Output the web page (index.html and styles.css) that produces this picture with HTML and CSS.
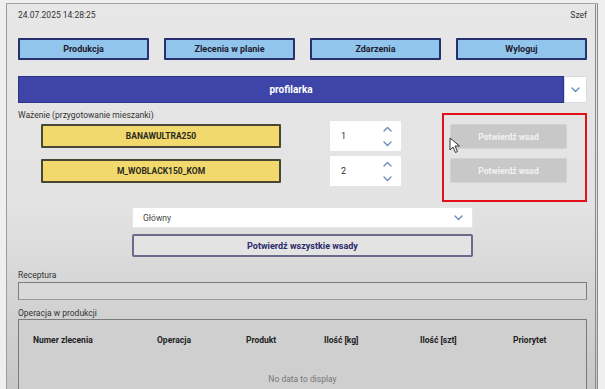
FILE: index.html
```html
<!DOCTYPE html>
<html lang="pl">
<head>
<meta charset="utf-8">
<title>Ważenie</title>
<link rel="stylesheet" href="styles.css">
</head>
<body>
<div class="frame">
  <header class="topbar">
    <span class="clock">24.07.2025 14:28:25</span>
    <span class="user">Szef</span>
  </header>

  <nav class="nav">
    <button class="nav-btn">Produkcja</button>
    <button class="nav-btn">Zlecenia w planie</button>
    <button class="nav-btn">Zdarzenia</button>
    <button class="nav-btn">Wyloguj</button>
  </nav>

  <div class="machine">
    <div class="machine-bar">profilarka</div>
    <div class="machine-drop">
      <svg class="chev" width="9" height="6" viewBox="0 0 9 6"><polyline points="1,1 4.5,4.5 8,1"/></svg>
    </div>
  </div>

  <section class="weigh">
    <div class="weigh-left">
      <div class="label">Ważenie (przygotowanie mieszanki)</div>
      <div class="mix-row first">
        <div class="mix">BANAWULTRA250</div>
        <div class="num">
          <span class="num-val">1</span>
          <span class="spin">
            <svg class="chev" width="9" height="6" viewBox="0 0 9 6"><polyline points="1,5 4.5,1.5 8,5"/></svg>
            <svg class="chev" width="9" height="6" viewBox="0 0 9 6"><polyline points="1,1 4.5,4.5 8,1"/></svg>
          </span>
        </div>
      </div>
      <div class="mix-row second">
        <div class="mix">M_WOBLACK150_KOM</div>
        <div class="num">
          <span class="num-val">2</span>
          <span class="spin">
            <svg class="chev" width="9" height="6" viewBox="0 0 9 6"><polyline points="1,5 4.5,1.5 8,5"/></svg>
            <svg class="chev" width="9" height="6" viewBox="0 0 9 6"><polyline points="1,1 4.5,4.5 8,1"/></svg>
          </span>
        </div>
      </div>
    </div>
    <div class="confirm-box">
      <button class="confirm">Potwierdź wsad</button>
      <button class="confirm">Potwierdź wsad</button>
      <svg class="cursor" width="12" height="17" viewBox="0 0 12 17"><path d="M1 1 L1 13 L4 10 L6.5 15.5 L8.5 14.5 L6 9 L10.5 9 Z" fill="#fff" stroke="#333" stroke-width="1"/></svg>
    </div>
  </section>

  <div class="store">
    <div class="select">
      <span>Główny</span>
      <svg class="chev" width="9" height="6" viewBox="0 0 9 6"><polyline points="1,1 4.5,4.5 8,1"/></svg>
    </div>
    <button class="confirm-all">Potwierdź wszystkie wsady</button>
  </div>

  <div class="label recipe-label">Receptura</div>
  <div class="recipe"></div>

  <div class="label ops-label">Operacja w produkcji</div>
  <div class="table">
    <div class="thead">
      <span>Numer zlecenia</span>
      <span>Operacja</span>
      <span>Produkt</span>
      <span>Ilość [kg]</span>
      <span>Ilość [szt]</span>
      <span>Priorytet</span>
    </div>
    <div class="empty">No data to display</div>
  </div>
</div>
</body>
</html>
```

FILE: styles.css
```css
* { box-sizing: border-box; }

html, body {
  margin: 0;
  height: 389px;
  overflow: hidden;
  background: #efefef;
  font-family: Roboto, "Liberation Sans", sans-serif;
  color: #222;
}

.frame {
  margin: 3px 7px 0 6px;
  height: 400px;
  border-top: 1px solid #a4a4a4;
  border-left: 1px solid #9c9c9c;
  border-right: 3px double #8a8a8a;
  padding: 0 8px 0 11px;
  background: linear-gradient(#e7e7e7 0px, #e3e3e3 200px, #d3d3d3 300px, #c7c7c7 389px);
}

.topbar {
  height: 22px;
  display: flex;
  align-items: center;
  justify-content: space-between;
  font-size: 8.5px;
  color: #333;
}

.nav {
  margin-top: 12px;
  display: grid;
  grid-template-columns: repeat(4, 1fr);
  column-gap: 15px;
}

.nav-btn {
  height: 22px;
  background: #92c5ec;
  border: 2px solid #283070;
  border-radius: 1px;
  font-family: inherit;
  font-size: 9px;
  font-weight: 700;
  color: #1e2030;
  padding: 0;
}

.machine {
  margin-top: 16px;
  display: flex;
  height: 27px;
}

.machine-bar {
  flex: 1;
  background: #3d45a8;
  border: 1px solid #2c3288;
  color: #fff;
  font-size: 10px;
  font-weight: 700;
  display: flex;
  align-items: center;
  justify-content: center;
}

.machine-drop {
  width: 23px;
  background: #fff;
  border: 1px solid #dcdcdc;
  display: flex;
  align-items: center;
  justify-content: center;
}

.chev polyline {
  fill: none;
  stroke: #6a8db5;
  stroke-width: 1.4;
  stroke-linecap: round;
  stroke-linejoin: round;
}

.label {
  font-size: 8.5px;
  line-height: 12px;
  color: #333;
}

.weigh {
  margin-top: 6px;
  display: flex;
}

.weigh-left {
  flex: 1;
}

.mix-row {
  display: flex;
  align-items: center;
  margin-left: 23px;
  margin-top: -1px;
}
.mix-row.second { margin-top: 3px; }

.mix {
  width: 240px;
  height: 24px;
  background: #f1d96e;
  border: 2px solid #4a4634;
  border-radius: 1px;
  display: flex;
  align-items: center;
  justify-content: center;
  font-size: 8.5px;
  font-weight: 700;
  color: #2a2a22;
}

.num {
  margin-left: 48px;
  width: 73px;
  height: 32px;
  background: #fff;
  border: 1px solid #e4e4e4;
  display: flex;
  align-items: center;
  justify-content: space-between;
  padding: 0 9px 0 11px;
  font-size: 9px;
  color: #333;
}

.spin {
  display: flex;
  flex-direction: column;
  gap: 9px;
}

.confirm-box {
  position: relative;
  margin-top: 4px;
  width: 145px;
  height: 89px;
  border: 2px solid #e3101c;
  padding: 9px 0 0 6px;
  display: flex;
  flex-direction: column;
  gap: 9px;
}

.confirm {
  width: 117px;
  height: 25px;
  background: #c8c8c8;
  border: 1px solid #d2d2d2;
  border-radius: 1px;
  font-family: inherit;
  font-size: 8.5px;
  font-weight: 700;
  color: #f2f2f2;
  padding: 0;
}

.cursor {
  position: absolute;
  left: 5px;
  top: 22px;
}

.store {
  margin-top: 5px;
  margin-left: 114px;
  width: 341px;
  display: flex;
  flex-direction: column;
  gap: 6px;
}

.select {
  height: 21px;
  background: #fff;
  border: 1px solid #e6e6e6;
  display: flex;
  align-items: center;
  justify-content: space-between;
  padding: 0 9px 0 10px;
  font-size: 8.5px;
  color: #444;
}

.confirm-all {
  height: 23px;
  background: #e3e3e3;
  border: 2px solid #6c6a8a;
  border-radius: 2px;
  font-family: inherit;
  font-size: 9px;
  font-weight: 700;
  color: #2a2a6c;
  padding: 0;
}

.recipe-label { margin-top: 12px; }

.recipe {
  height: 18px;
  border: 1px solid #7c7c7c;
  border-bottom-color: #9a9a9a;
  background: #d9d9d9;
  margin-top: 1px;
}

.ops-label { margin-top: 7px; }

.table {
  height: 80px;
  border: 1px solid #7a7a7a;
  border-bottom: none;
  background: #cfcfcf;
}

.thead {
  height: 40px;
  display: grid;
  grid-template-columns: 124px 89px 78px 96px 93px 1fr;
  align-items: center;
  padding-left: 14px;
  font-size: 8.5px;
  font-weight: 700;
  color: #222;
}

.empty {
  text-align: center;
  font-size: 8.5px;
  color: #777;
  line-height: 38px;
}
```
